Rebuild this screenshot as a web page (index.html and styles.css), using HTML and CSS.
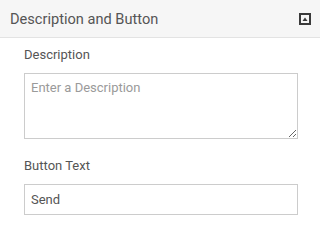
FILE: index.html
```html
<!DOCTYPE html>
<html>
<head>
<meta charset="utf-8">
<link rel="stylesheet" href="styles.css">
</head>
<body>
<div class="panel">
  <div class="panel-header">
    <span class="panel-title">Description and Button</span>
    <svg class="collapse-icon" width="12" height="12" viewBox="0 0 12 12">
      <rect x="1" y="1" width="10" height="10" fill="none" stroke="#3a3a3a" stroke-width="2"/>
      <path d="M3.5 8 L6 4.5 L8.5 8 Z" fill="#3a3a3a"/>
    </svg>
  </div>
  <div class="panel-body">
    <div class="field">
      <label class="field-label">Description</label>
      <textarea class="field-textarea" placeholder="Enter a Description"></textarea>
    </div>
    <div class="field">
      <label class="field-label">Button Text</label>
      <input class="field-input" type="text" value="Send">
    </div>
  </div>
</div>
</body>
</html>
```

FILE: styles.css
```css
html, body {
  margin: 0;
  padding: 0;
  background: #ffffff;
  font-family: Roboto, "Liberation Sans", Arial, sans-serif;
}
.panel {
  width: 320px;
}
.panel-header {
  height: 38px;
  box-sizing: border-box;
  background: #f6f6f6;
  border-bottom: 1px solid #e3e3e3;
  display: flex;
  align-items: center;
  justify-content: space-between;
  padding: 1px 9px 0 10px;
}
.panel-title {
  font-size: 14.6px;
  color: #555555;
}
.collapse-icon {
  display: block;
}
.panel-body {
  padding: 9px 22px 0 24px;
  display: flex;
  flex-direction: column;
  gap: 19px;
}
.field {
  display: flex;
  flex-direction: column;
  gap: 10px;
}
.field-label {
  font-size: 13px;
  line-height: 16px;
  color: #555555;
}
.field-textarea,
.field-input {
  box-sizing: border-box;
  width: 274px;
  margin: 0;
  border: 1px solid #cccccc;
  border-radius: 0;
  font-family: Roboto, "Liberation Sans", Arial, sans-serif;
  font-size: 13px;
  color: #555555;
  padding: 6px 6px;
  outline: none;
}
.field-textarea {
  height: 66px;
  resize: vertical;
}
.field-textarea::placeholder {
  color: #9a9a9a;
}
.field-input {
  height: 31px;
}
```
